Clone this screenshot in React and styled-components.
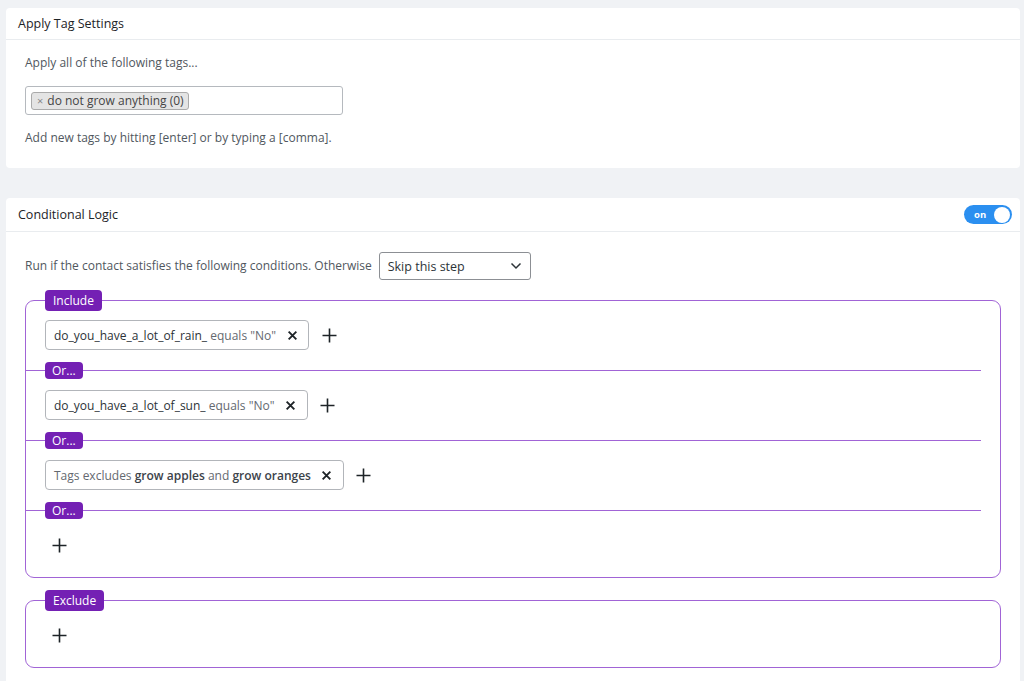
import React from "react";
import styled, { createGlobalStyle } from "styled-components";

const Global = createGlobalStyle`
  html, body { margin: 0; padding: 0; background: #f0f2f5; }
  body {
    font-family: "Open Sans", "Noto Sans", sans-serif;
    font-size: 12px;
    color: #3c434a;
  }
  * { box-sizing: border-box; }
`;

const Page = styled.div`
  padding: 8px 4px 0 6px;
  display: flex;
  flex-direction: column;
  gap: 30px;
  height: 681px;
  overflow: hidden;
`;

const Panel = styled.div`
  background: #fff;
  border-radius: 4px;
  flex-shrink: 0;
`;

const PanelHeader = styled.div`
  height: ${(p) => p.h || 32}px;
  padding: 0 8px 0 12px;
  display: flex;
  align-items: center;
  justify-content: space-between;
  border-bottom: 1px solid #e9ecef;
  font-weight: 500;
  font-size: 12.5px;
  color: #1d2327;
`;

const PanelBody = styled.div`
  padding: ${(p) => p.pad || "14px 19px 21px"};
  display: flex;
  flex-direction: column;
`;

const Text = styled.div`
  line-height: 18px;
  color: #50575e;
  font-size: 12px;
`;

const TagInput = styled.div`
  margin: 14px 0;
  width: 318px;
  height: 29px;
  border: 1px solid #b5b9be;
  border-radius: 3px;
  padding: 0 5px;
  display: flex;
  align-items: center;
`;

const TagChip = styled.span`
  display: inline-flex;
  align-items: center;
  gap: 4px;
  height: 18px;
  padding: 0 4px 0 5px;
  background: #e4e4e4;
  border: 1px solid #aaa;
  border-radius: 3px;
  color: #444;
  font-size: 12px;
  span { color: #888; font-size: 11px; }
`;

const Toggle = styled.div`
  width: 48px;
  height: 19px;
  border-radius: 10px;
  background: #2b8ff0;
  display: flex;
  align-items: center;
  justify-content: space-between;
  padding: 0 2px 0 10px;
  color: #fff;
  font-size: 9.5px;
  font-weight: 700;
  &::after {
    content: "";
    width: 16px;
    height: 16px;
    border-radius: 50%;
    background: #fff;
  }
`;

const RunRow = styled.div`
  display: flex;
  align-items: center;
  gap: 7px;
`;

const Select = styled.div`
  width: 152px;
  height: 28px;
  border: 1px solid #8c8f94;
  border-radius: 3px;
  padding: 0 8px;
  display: flex;
  align-items: center;
  justify-content: space-between;
  color: #2c3338;
  font-size: 12.5px;
`;

const Group = styled.div`
  position: relative;
  margin-top: ${(p) => p.mt}px;
  border: 1px solid #a164d6;
  border-radius: 9px;
  padding: 19px 19px 17px;
  display: flex;
  flex-direction: column;
`;

const Badge = styled.span`
  position: ${(p) => (p.floating ? "absolute" : "relative")};
  top: ${(p) => (p.floating ? "-11px" : "auto")};
  left: ${(p) => (p.floating ? "19px" : "auto")};
  display: inline-flex;
  align-items: center;
  height: ${(p) => (p.floating ? 21 : 17)}px;
  padding: 0 ${(p) => (p.floating ? 8 : 7)}px;
  background: #7420b4;
  color: #fff;
  border-radius: 4px;
  font-size: 12px;
  font-weight: 500;
  margin-left: ${(p) => (p.floating ? 0 : 19)}px;
`;

const Row = styled.div`
  display: flex;
  align-items: center;
  gap: 12px;
  height: 30px;
  padding-left: ${(p) => p.indent || 0}px;
`;

const Condition = styled.div`
  height: 30px;
  display: inline-flex;
  align-items: center;
  gap: 8px;
  padding: 0 8px;
  border: 1px solid #b2b5ba;
  border-radius: 4px;
  color: #646970;
  font-size: 12px;
  white-space: nowrap;
  b { color: #2c3338; font-weight: 400; }
  strong { color: #3c434a; font-weight: 600; }
`;

const Divider = styled.div`
  height: 40px;
  margin: 0 0 0 -19px;
  display: flex;
  align-items: center;
  background: linear-gradient(#a164d6, #a164d6) center / 100% 1px no-repeat;
`;

const IconBtn = styled.span`
  display: inline-flex;
  align-items: center;
  justify-content: center;
  width: 16px;
  height: 16px;
  color: #1d2327;
`;

const Close = () => (
  <IconBtn>
    <svg width="11" height="11" viewBox="0 0 10 10">
      <path d="M1.5 1.5l7 7M8.5 1.5l-7 7" stroke="currentColor" strokeWidth="1.7" />
    </svg>
  </IconBtn>
);

const Plus = () => (
  <IconBtn>
    <svg width="15" height="15" viewBox="0 0 15 15">
      <path d="M7.5 0.5v14M0.5 7.5h14" stroke="currentColor" strokeWidth="1.6" />
    </svg>
  </IconBtn>
);

const Chevron = () => (
  <svg width="12" height="8" viewBox="0 0 12 8">
    <path d="M1.5 1.5l4.5 4.5 4.5-4.5" fill="none" stroke="#2c3338" strokeWidth="1.5" />
  </svg>
);

const ConditionRow = ({ children }) => (
  <Row>
    <Condition>
      <span>{children}</span>
      <Close />
    </Condition>
    <Plus />
  </Row>
);

const OrDivider = () => (
  <Divider>
    <Badge>Or...</Badge>
  </Divider>
);

export default function App() {
  return (
    <>
      <Global />
      <Page>
        <Panel>
          <PanelHeader>Apply Tag Settings</PanelHeader>
          <PanelBody>
            <Text>Apply all of the following tags...</Text>
            <TagInput>
              <TagChip>
                <span>×</span>do not grow anything (0)
              </TagChip>
            </TagInput>
            <Text>Add new tags by hitting [enter] or by typing a [comma].</Text>
          </PanelBody>
        </Panel>

        <Panel>
          <PanelHeader h={34}>
            Conditional Logic
            <Toggle>on</Toggle>
          </PanelHeader>
          <PanelBody pad="20px 19px 20px">
            <RunRow>
              <Text>Run if the contact satisfies the following conditions. Otherwise</Text>
              <Select>
                Skip this step
                <Chevron />
              </Select>
            </RunRow>

            <Group mt={20}>
              <Badge floating>Include</Badge>
              <ConditionRow>
                <b>do_you_have_a_lot_of_rain_</b> equals "No"
              </ConditionRow>
              <OrDivider />
              <ConditionRow>
                <b>do_you_have_a_lot_of_sun_</b> equals "No"
              </ConditionRow>
              <OrDivider />
              <ConditionRow>
                Tags excludes <strong>grow apples</strong> and <strong>grow oranges</strong>
              </ConditionRow>
              <OrDivider />
              <Row indent={6}>
                <Plus />
              </Row>
            </Group>

            <Group mt={22}>
              <Badge floating>Exclude</Badge>
              <Row indent={6}>
                <Plus />
              </Row>
            </Group>
          </PanelBody>
        </Panel>
      </Page>
    </>
  );
}
